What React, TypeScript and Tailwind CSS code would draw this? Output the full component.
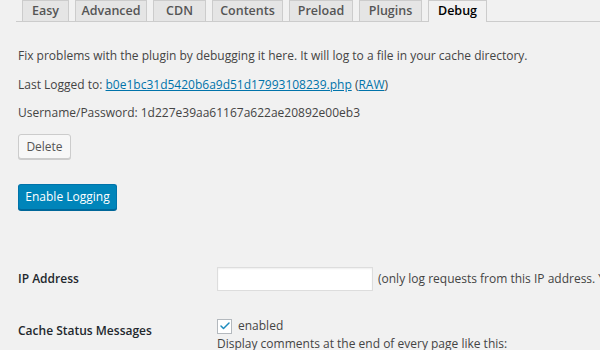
import { Check } from "lucide-react"

const tabs = [
  { label: "Easy", w: "w-[47px]" },
  { label: "Advanced", w: "w-[72px]" },
  { label: "CDN", w: "w-[53px]" },
  { label: "Contents", w: "w-[71px]" },
  { label: "Preload", w: "w-[64px]" },
  { label: "Plugins", w: "w-[63px]" },
  { label: "Debug", w: "w-[59px]", active: true },
]

export default function App() {
  return (
    <div className="min-h-screen h-[350px] overflow-hidden bg-[#f1f1f1] font-['Open_Sans',sans-serif] text-[12px] text-[#444]">
      {/* Tabs */}
      <div className="ml-4 flex h-[22px] items-end border-b border-[#ccc]">
        {tabs.map((t) =>
          t.active ? (
            <div
              key={t.label}
              className={`${t.w} -mb-px ml-[6px] flex h-[22px] shrink-0 items-center justify-center border border-b-0 border-[#ccc] bg-[#f1f1f1] text-[12.5px] font-semibold text-[#000]`}
            >
              {t.label}
            </div>
          ) : (
            <div
              key={t.label}
              className={`${t.w} ml-[6px] flex h-[21px] shrink-0 items-center justify-center border border-b-0 border-[#ccc] bg-[#e5e5e5] text-[12.5px] font-semibold text-[#555]`}
            >
              {t.label}
            </div>
          )
        )}
      </div>

      <div className="px-[18px]">
        <p className="mt-[24px] leading-[20px]">
          Fix problems with the plugin by debugging it here. It will log to a file in your cache directory.
        </p>
        <p className="mt-[9px] leading-[20px]">
          Last Logged to:{" "}
          <a className="text-[#0073aa] underline" href="#">
            b0e1bc31d5420b6a9d51d17993108239.php
          </a>{" "}
          (
          <a className="text-[#0073aa] underline" href="#">
            RAW
          </a>
          )
        </p>
        <p className="mt-[8px] leading-[20px]">Username/Password: 1d227e39aa61167a622ae20892e00eb3</p>

        <button className="mt-[11px] flex h-[25px] w-[53px] items-center justify-center rounded-[3px] border border-[#ccc] bg-[#f7f7f7] text-[12px] text-[#555] shadow-[0_1px_0_#ccc]">
          Delete
        </button>

        <button className="mt-[25px] flex h-[26px] w-[99px] items-center justify-center rounded-[3px] border border-[#0073aa] border-b-[#006799] bg-[#0085ba] text-[12px] text-white shadow-[0_1px_0_#006799]">
          Enable Logging
        </button>

        {/* Settings table */}
        <div className="mt-[57px] flex items-center">
          <div className="w-[199px] shrink-0 text-[12px] font-semibold text-[#23282d]">IP Address</div>
          <input
            type="text"
            className="h-[24px] w-[156px] shrink-0 border border-[#ddd] bg-white shadow-[inset_0_1px_2px_rgba(0,0,0,0.07)] outline-none"
          />
          <span className="ml-[5px] whitespace-nowrap">(only log requests from this IP address. Your IP is 127.0.0.1)</span>
        </div>

        <div className="mt-[27px] flex">
          <div className="w-[199px] shrink-0 pt-[4px] text-[12px] font-semibold text-[#23282d]">
            Cache Status Messages
          </div>
          <div className="flex flex-col">
            <div className="flex h-[16px] items-center">
              <span className="flex h-[15px] w-[15px] items-center justify-center border border-[#b4b9be] bg-white">
                <Check className="h-[12px] w-[12px] text-[#1e8cbe]" strokeWidth={3} />
              </span>
              <span className="ml-[6px]">enabled</span>
            </div>
            <div className="mt-[1px] leading-[18px]">Display comments at the end of every page like this:</div>
          </div>
        </div>
      </div>
    </div>
  )
}
